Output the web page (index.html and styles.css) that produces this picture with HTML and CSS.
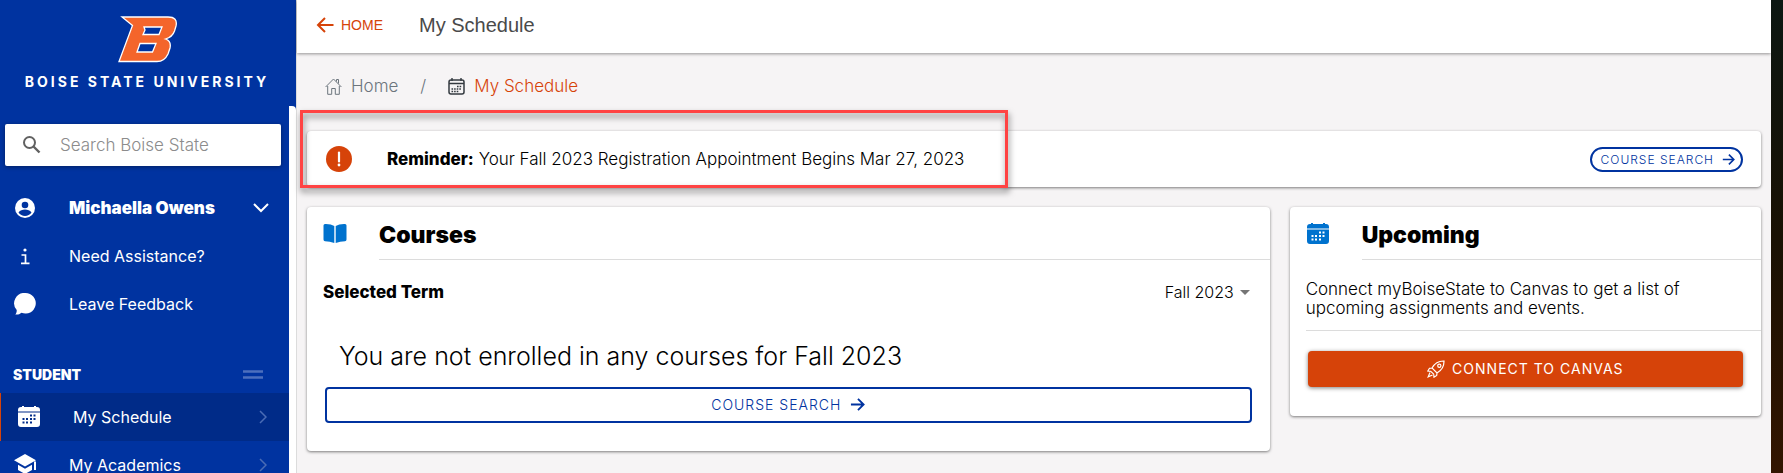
FILE: index.html
```html
<!DOCTYPE html>
<html lang="en">
<head>
    <meta charset="UTF-8">
    <meta name="viewport" content="width=device-width, initial-scale=1.0">
    <title>My Schedule</title>
    <link rel="stylesheet" href="styles.css">
</head>
<body>
<!-- shared icons -->
<svg class="sprite" aria-hidden="true">
    <symbol id="arrow-right" viewBox="0 0 16 16">
        <path d="M1 8h13M8.500 2l6 6-6 6" fill="none" stroke="currentColor" stroke-width="2"/>
    </symbol>
    <symbol id="calendar" viewBox="0 0 22 22">
        <path d="M0 5.500V4a3 3 0 0 1 3-3h1V0h2v1h10V0h2v1h1a3 3 0 0 1 3 3v1.500z" fill="currentColor"/>
        <path fill-rule="evenodd" d="M0 6.500h22V18a3 3 0 0 1-3 3H3a3 3 0 0 1-3-3zM12 8.500v2h2v-2zM15.500 8.500v2h2v-2zM4.500 12v2h2v-2zM8 12v2h2v-2zM12 12v2h2v-2zM15.500 12v2h2v-2zM4.500 15.500v2h2v-2zM8 15.500v2h2v-2zM12 15.500v2h2v-2z" fill="currentColor"/>
    </symbol>
    <symbol id="chevron" viewBox="0 0 8 14">
        <path d="M1 1l6 6-6 6" fill="none" stroke="currentColor" stroke-width="1.500"/>
    </symbol>
</svg>

<div class="app">
    <aside class="sidebar">
        <a class="brand" href="#">
            <svg class="brand-mark" viewBox="0 0 59 47" role="img" aria-label="Boise State">
                <path fill-rule="evenodd" d="M4 1H50Q60 1 58 10L56.500 15Q54.500 21 47.500 23Q53.500 25 52 32L50 38Q46.500 45.500 39 45.500H1L14.500 9.500ZM26 11L27 14L25 18.500H41L44 11ZM22 27.500L19 36H34.500L38 27.500Z" fill="#f4652b" stroke="#fff" stroke-width="1.300"/>
            </svg>
            <span class="brand-name">BOISE STATE UNIVERSITY</span>
        </a>
        <div class="sidebar-scroll">
            <form class="search">
                <svg class="search-icon" viewBox="0 0 18 18"><circle cx="6.500" cy="6.500" r="5.500" fill="none" stroke="#616161" stroke-width="2"/><path d="M10.500 10.500l6 6" stroke="#616161" stroke-width="2.400"/></svg>
                <input type="search" aria-label="Search Boise State" placeholder="Search Boise State">
            </form>
            <nav class="menu">
                <button type="button" class="menu-item user">
                    <svg class="menu-icon" viewBox="0 0 22 22"><circle cx="11" cy="11" r="10" fill="#fff"/><circle cx="11" cy="8" r="3.300" fill="#0033a0"/><path d="M4.500 15.500C6 13.300 8.500 12.600 11 12.600s5 .7 6.500 2.900C16 17.800 13.700 19 11 19s-5-1.200-6.500-3.500z" fill="#0033a0"/></svg>
                    <span>Michaella Owens</span>
                    <svg class="down" viewBox="0 0 16 10"><path d="M1 1l7 7 7-7" fill="none" stroke="#fff" stroke-width="2"/></svg>
                </button>
                <a class="menu-item" href="#">
                    <svg class="menu-icon" viewBox="0 0 22 22"><path d="M7.500 10h4v8M7 18.300h8.500" fill="none" stroke="#fff" stroke-width="1.700"/><circle cx="11" cy="5" r="1.600" fill="#fff"/></svg>
                    <span>Need Assistance?</span>
                </a>
                <a class="menu-item" href="#">
                    <svg class="menu-icon" viewBox="0 0 22 22"><path d="M11.500 0a10.300 10.300 0 1 1-4 19.800C5.500 21.500 3.500 21.800 1.300 21.500c1-1.200 1.500-2.400 1.400-4.500A10.300 10.300 0 0 1 11.500 0z" fill="#fff"/></svg>
                    <span>Leave Feedback</span>
                </a>
            </nav>
            <div class="group-head">
                <span>STUDENT</span>
                <svg class="handle" viewBox="0 0 20 9"><path d="M0 1.500h20M0 7.500h20" stroke="currentColor" stroke-width="2.500"/></svg>
            </div>
            <nav class="menu">
                <a class="menu-item active" href="#">
                    <svg class="menu-icon"><use href="#calendar"/></svg>
                    <span>My Schedule</span>
                    <svg class="next"><use href="#chevron"/></svg>
                </a>
                <a class="menu-item" href="#">
                    <svg class="menu-icon" viewBox="0 0 22 22"><path d="M11 0l11 6.200-11 6.200L0 6.200zM4 10.800l7 4 7-4v5.200l-7 4-7-4zM20 7.500h2V16h-2z" fill="#fff"/></svg>
                    <span>My Academics</span>
                    <svg class="next"><use href="#chevron"/></svg>
                </a>
            </nav>
        </div>
    </aside>

    <main class="main">
        <header class="topbar">
            <a class="back" href="#">
                <svg viewBox="0 0 18 16"><path d="M17.500 8H2M9 1L2 8l7 7" fill="none" stroke="currentColor" stroke-width="2"/></svg>
                HOME
            </a>
            <h1>My Schedule</h1>
        </header>

        <nav class="breadcrumb" aria-label="Breadcrumb">
            <a href="#">
                <svg class="crumb-icon" viewBox="0 0 17 17"><path d="M.6 9L8.500 1l7.900 8M2.700 8v8.300h4V10.500h3.600v5.800h4V8M11.500 3.500V1.500h2v4" fill="none" stroke="currentColor"/></svg>
                Home
            </a>
            <span class="slash">/</span>
            <a class="current" href="#" aria-current="page">
                <svg class="crumb-icon" viewBox="0 0 17 17"><rect x="1" y="2" width="15" height="14" rx="2" fill="none" stroke="currentColor" stroke-width="1.500"/><path d="M1 5.500h15M4 0v3M13 0v3" stroke="currentColor" stroke-width="1.400"/><path d="M9 8.500h5M3.500 11h9.500M3.500 13.500h7" stroke="currentColor" stroke-width="1.600" stroke-dasharray="1.600 1"/></svg>
                My Schedule
            </a>
        </nav>

        <section class="card reminder">
            <svg class="alert-icon" viewBox="0 0 26 26"><circle cx="13" cy="13" r="13" fill="#d64309"/><path d="M13 6.500v9" stroke="#fff" stroke-width="2.200" stroke-linecap="round"/><circle cx="13" cy="19" r="1.400" fill="#fff"/></svg>
            <p><strong>Reminder:</strong> Your Fall 2023 Registration Appointment Begins Mar 27, 2023</p>
            <button type="button" class="pill">COURSE SEARCH <svg><use href="#arrow-right"/></svg></button>
            <div class="highlight"></div>
        </section>

        <div class="columns">
            <section class="card courses">
                <div class="card-head">
                    <svg class="card-icon" viewBox="0 0 24 22"><path d="M.5 2.500Q.5 1 2 1Q8 .8 11.300 3V20Q7 18.300 2 18.200Q.5 18 .5 16.500zM23.500 2.500Q23.500 1 22 1Q16 .8 12.700 3V20Q17 18.300 22 18.200Q23.500 18 23.500 16.500z" fill="currentColor"/></svg>
                    <h2>Courses</h2>
                </div>
                <div class="term">
                    <label for="term">Selected Term</label>
                    <div class="term-select">
                        <select id="term"><option>Fall 2023</option></select>
                        <svg viewBox="0 0 10 5"><path d="M0 0h10L5 5z" fill="#757575"/></svg>
                    </div>
                </div>
                <p class="empty">You are not enrolled in any courses for Fall 2023</p>
                <button type="button" class="btn outline">COURSE SEARCH <svg><use href="#arrow-right"/></svg></button>
            </section>

            <section class="card upcoming">
                <div class="card-head">
                    <svg class="card-icon"><use href="#calendar"/></svg>
                    <h2>Upcoming</h2>
                </div>
                <p class="info">Connect myBoiseState to Canvas to get a list of upcoming assignments and events.</p>
                <button type="button" class="btn solid">
                    <svg viewBox="0 0 18 18"><path d="M5 8C7.500 3.500 11 .8 17 1c.2 6-2.500 9.500-7 12L5 8zM5 8L2.500 8.300.8 11l3 .3M10 13l-.3 2.500L7 17.200l-.3-3M3.800 11.300l2.900 2.900M3 12.500l-1.800 4.300L5.500 15" fill="none" stroke="currentColor" stroke-width="1.200"/><circle cx="12.300" cy="5.700" r="1.600" fill="none" stroke="currentColor" stroke-width="1.200"/></svg>
                    CONNECT TO CANVAS
                </button>
            </section>
        </div>
    </main>
    <div class="backdrop"></div>
</div>
</body>
</html>
```
FILE: styles.css
```css
* {
    box-sizing: border-box;
}

body {
    margin: 0;
    font-family: Inter, sans-serif;
    font-size: 17px;
    font-weight: 300;
    color: #000;
}

h1, h2, p {
    margin: 0;
}

a {
    color: inherit;
    text-decoration: none;
}

button, input, select {
    font: inherit;
    color: inherit;
}

button {
    cursor: pointer;
}

svg {
    flex: none;
}

.sprite {
    position: absolute;
    width: 0;
    height: 0;
}

.app {
    display: flex;
    height: 100vh;
    overflow: hidden;
}

/* sidebar */
.sidebar {
    display: flex;
    flex-direction: column;
    flex: none;
    width: 296px;
    background: #0033a0;
    color: #fff;
}

.brand {
    display: flex;
    flex-direction: column;
    align-items: center;
    height: 106px;
    flex: none;
    padding: 16px 2px 0 0;
}

.brand-mark {
    width: 59px;
    height: 47px;
}

.brand-name {
    margin-top: 10px;
    font-size: 14px;
    line-height: 18px;
    font-weight: 700;
    letter-spacing: 3px;
    white-space: nowrap;
}

.sidebar-scroll {
    flex: 1;
    min-height: 0;
    padding-top: 18px;
    overflow: hidden;
    border-right: 7px solid #fff;
    border-top-right-radius: 4px;
}

.search {
    display: flex;
    align-items: center;
    height: 42px;
    margin: 0 8px 18px 5px;
    padding-left: 18px;
    background: #fff;
    border-radius: 2px;
    box-shadow: 0 1px 4px rgba(0, 0, 0, 0.4);
}

.search-icon {
    width: 18px;
    height: 18px;
}

.search input {
    flex: 1;
    min-width: 0;
    margin-left: 19px;
    padding: 0;
    border: 0;
    outline: none;
    background: none;
    color: #333;
}

.search input::placeholder {
    color: #8c8c8c;
}

.menu-item {
    display: flex;
    align-items: center;
    width: 100%;
    height: 48px;
    padding: 0 20px 0 14px;
    border: 0;
    background: none;
    text-align: left;
    font-size: 16px;
    font-weight: 400;
}

.menu-item span {
    flex: 1;
    margin-left: 33px;
}

.menu-item.user {
    font-size: 17px;
    font-weight: 900;
}

.menu-icon {
    width: 22px;
    height: 22px;
}

.down {
    width: 16px;
    height: 10px;
}

.next {
    width: 8px;
    height: 14px;
    margin-right: 2px;
    color: #4a6cb5;
}

.group-head {
    display: flex;
    align-items: center;
    justify-content: space-between;
    height: 38px;
    margin-top: 27px;
    padding: 0 26px 0 13px;
    font-size: 14px;
    font-weight: 900;
}

.handle {
    width: 20px;
    height: 9px;
    color: #4d70bd;
}

.menu-item.active {
    padding-left: 17px;
    border-left: 1px solid #d64309;
    background: #002b88;
}

/* page */
.main {
    flex: 1;
    min-width: 0;
    background: #f6f4f5;
    border-left: 1px solid #dcdcdc;
}

.topbar {
    display: flex;
    align-items: center;
    height: 53px;
    padding: 0 19px 3px;
    background: #fff;
    box-shadow: 0 1px 3px rgba(0, 0, 0, 0.4);
    font-family: "Liberation Sans", Arial, sans-serif;
}

.back {
    display: flex;
    align-items: center;
    gap: 7px;
    color: #d64309;
    font-size: 14px;
    font-weight: 400;
}

.back svg {
    width: 18px;
    height: 16px;
}

.topbar h1 {
    margin-left: 36px;
    font-size: 20px;
    font-weight: 400;
    color: #4a4a4a;
}

.breadcrumb {
    display: flex;
    align-items: center;
    height: 66px;
    padding-left: 28px;
    color: #6c757d;
}

.breadcrumb a {
    display: flex;
    align-items: center;
    gap: 9px;
}

.crumb-icon {
    width: 17px;
    height: 17px;
}

.slash {
    margin: 0 22px;
}

.breadcrumb .current {
    color: #d64309;
}

.current .crumb-icon {
    color: #343a40;
}

.card {
    margin: 0 10px;
    background: #fff;
    border-radius: 4px;
    box-shadow: 0 1px 3px rgba(0, 0, 0, 0.5);
}

.reminder {
    position: relative;
    display: flex;
    align-items: center;
    height: 56px;
    margin-top: 12px;
    padding: 0 18px 0 19px;
}

.alert-icon {
    width: 26px;
    height: 26px;
}

.reminder p {
    flex: 1;
    margin-left: 35px;
}

strong {
    font-weight: 800;
}

/* marker around the reminder text */
.highlight {
    position: absolute;
    top: -21px;
    left: -7px;
    width: 708px;
    height: 78px;
    border: 3px solid #ff4343;
    filter: drop-shadow(1px 4px 3px rgba(0, 0, 0, 0.5));
    pointer-events: none;
}

.pill {
    display: flex;
    align-items: center;
    gap: 8px;
    height: 25px;
    padding: 0 6px 0 9px;
    border: 2px solid #0033a0;
    border-radius: 13px;
    background: #fff;
    color: #0033a0;
    font-size: 12px;
    letter-spacing: 1px;
}

.pill svg {
    width: 13px;
    height: 13px;
}

.columns {
    display: grid;
    grid-template-columns: 2fr 1fr;
    align-items: start;
    margin-top: 20px;
}

.courses {
    padding: 0 18px 28px 16px;
}

.upcoming {
    padding: 0 18px 29px 16px;
}

.card-head {
    display: flex;
    height: 53px;
    margin-right: -18px;
}

.card-icon {
    width: 24px;
    height: 22px;
    margin-top: 16px;
    color: #0072ce;
}

.card-head h2 {
    flex: 1;
    margin-left: 32px;
    padding-top: 5px;
    border-bottom: 1px solid #dcdcdc;
    font-size: 23px;
    line-height: 46px;
    font-weight: 900;
}

.term {
    display: flex;
    align-items: center;
    justify-content: space-between;
    margin-top: 20px;
    height: 24px;
}

.term label {
    font-weight: 800;
}

.term-select {
    display: flex;
    align-items: center;
    gap: 5px;
    margin-right: 2px;
    font-size: 16px;
}

.term-select select {
    appearance: none;
    border: 0;
    padding: 0;
    background: none;
}

.term-select svg {
    width: 10px;
    height: 5px;
}

.empty {
    margin: 36px 0 15px 16px;
    font-size: 25px;
    line-height: 32px;
}

.btn {
    display: flex;
    align-items: center;
    justify-content: center;
    width: calc(100% - 2px);
    height: 36px;
    margin-left: 2px;
    padding-bottom: 2px;
    border: 0;
    border-radius: 4px;
    font-size: 14px;
    letter-spacing: 1px;
}

.outline {
    gap: 9px;
    border: 2px solid #0033a0;
    background: #fff;
    color: #0033a0;
}

.outline svg {
    width: 15px;
    height: 15px;
}

.info {
    margin-right: -18px;
    padding: 20px 70px 12px 0;
    border-bottom: 1px solid #dcdcdc;
    line-height: 19px;
}

.solid {
    gap: 7px;
    margin-top: 20px;
    background: #d64309;
    color: #fff;
    font-weight: 400;
    box-shadow: 0 1px 4px rgba(0, 0, 0, 0.5);
}

.solid svg {
    width: 18px;
    height: 18px;
}

/* strip of desktop showing beside the page */
.backdrop {
    flex: none;
    width: 12px;
    background: linear-gradient(#0c1712, #191103 50%, #331500);
}
```
